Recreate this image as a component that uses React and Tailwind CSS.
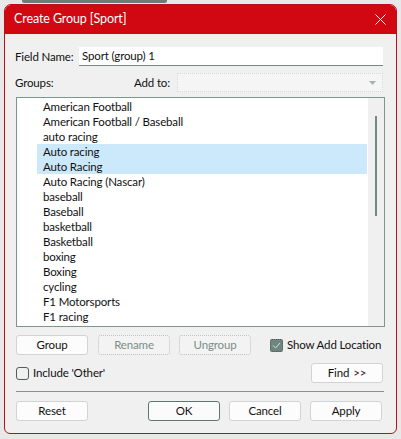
import React from "react";

const items = [
  "American Football",
  "American Football / Baseball",
  "auto racing",
  "Auto racing",
  "Auto Racing",
  "Auto Racing (Nascar)",
  "baseball",
  "Baseball",
  "basketball",
  "Basketball",
  "boxing",
  "Boxing",
  "cycling",
  "F1 Motorsports",
  "F1 racing",
];
const selected = new Set([3, 4]);

function Btn({ children, disabled, focus, className = "" }) {
  const base =
    "h-[20px] w-[72px] flex items-center justify-center rounded-[3px] text-[11.5px] leading-none whitespace-nowrap";
  if (disabled)
    return (
      <div className={`${base} border border-dotted border-[#b9c4bf] bg-[#f3f3f3] text-[#7d8d86] ${className}`}>
        {children}
      </div>
    );
  if (focus)
    return (
      <div className={`${base} border border-[#5f7670] bg-[#fbfbfb] text-[#111111] ${className}`}>
        {children}
      </div>
    );
  return (
    <div className={`${base} border border-[#d3d3d3] bg-[#fcfcfc] text-[#111111] ${className}`}>
      {children}
    </div>
  );
}

export default function App() {
  return (
    <div
      className="w-[401px] h-[439px] bg-[#e8e8e8] overflow-hidden"
      style={{ fontFamily: "Lato, 'Noto Sans', sans-serif" }}
    >
      <div className="h-[4px] flex">
        <div className="ml-[22px] w-[145px] h-[3px] bg-[#6f7b78] rounded-b-[2px]" />
      </div>
      <div className="ml-[4px] w-[393px] h-[430px] border border-[#b5101b] rounded-t-[7px] rounded-b-[6px] bg-[#f0f0f0] overflow-hidden flex flex-col">
        {/* title bar */}
        <div className="h-[29px] bg-[#d10812] flex items-center justify-between pl-[9px] pr-[10px]">
          <span className="text-white text-[12.5px] leading-none whitespace-nowrap tracking-[-0.1px]">Create Group [Sport]</span>
          <svg width="11" height="11" viewBox="0 0 11 11">
            <path d="M0.5 0.5 L10.5 10.5 M10.5 0.5 L0.5 10.5" stroke="#ffffff" strokeWidth="1" />
          </svg>
        </div>
        <div className="pl-[10px] pr-[12px] text-[11.5px] tracking-[-0.15px] leading-none text-[#111111]">
          {/* Field name */}
          <div className="mt-[13px] h-[19px] flex items-center">
            <span className="w-[64px] whitespace-nowrap">Field Name:</span>
            <div className="w-[304px] h-[19px] bg-white border-b border-[#75877f] flex items-center pl-[3px] whitespace-nowrap">
              Sport (group) 1
            </div>
          </div>
          {/* Groups / add to */}
          <div className="mt-[7px] h-[19px] flex items-center">
            <span className="w-[119px] whitespace-nowrap">Groups:</span>
            <span className="w-[43px] whitespace-nowrap">Add to:</span>
            <div className="w-[206px] h-[19px] border border-dotted border-[#d6dbd9] bg-[#f5f5f5] flex items-center justify-end pr-[6px]">
              <svg width="7" height="4" viewBox="0 0 7 4">
                <path d="M0 0 L7 0 L3.5 4 Z" fill="#a8b2ae" />
              </svg>
            </div>
          </div>
          {/* list */}
          <div className="mt-[5px] ml-[1px] w-[369px] h-[230px] border border-[#7c968c] bg-white flex">
            <div className="flex-1 pl-[20px] pt-[1px]">
              {items.map((t, i) => (
                <div
                  key={i}
                  className={`h-[15px] flex items-center pl-[6px] w-[330px] whitespace-nowrap ${
                    selected.has(i) ? "bg-[#cce8fb]" : ""
                  }`}
                >
                  {t}
                </div>
              ))}
            </div>
            <div className="w-[16px] bg-[#f0f0f0] flex justify-center pt-[18px]">
              <div className="w-[2px] h-[100px] bg-[#6f8a80]" />
            </div>
          </div>
          {/* buttons row */}
          <div className="mt-[8px] ml-[1px] h-[20px] flex items-center">
            <Btn>Group</Btn>
            <Btn disabled className="ml-[10px]">Rename</Btn>
            <Btn disabled className="ml-[9px]">Ungroup</Btn>
            <div className="ml-[19px] flex items-center">
              <div className="w-[13px] h-[13px] rounded-[2px] bg-[#6f8680] border border-dotted border-[#4d5e59] flex items-center justify-center">
                <svg width="9" height="7" viewBox="0 0 9 7">
                  <path d="M1 3.5 L3.5 6 L8 1" stroke="#d6e0dc" strokeWidth="1" fill="none" />
                </svg>
              </div>
              <span className="ml-[4px] whitespace-nowrap">Show Add Location</span>
            </div>
          </div>
          {/* include other / find */}
          <div className="mt-[8px] h-[20px] flex items-center justify-between">
            <div className="flex items-center ml-[1px]">
              <div className="w-[13px] h-[13px] rounded-[3px] border border-[#4e5f5a]" />
              <span className="ml-[4px] whitespace-nowrap">Include 'Other'</span>
            </div>
            <Btn className="mr-[1px]">
              Find <span className="ml-[4px] text-[#3a1216]">&gt;&gt;</span>
            </Btn>
          </div>
          {/* separator */}
          <div className="mt-[8px] ml-[1px] w-[368px] h-[1px] bg-[#7c968c]" />
          {/* bottom buttons */}
          <div className="mt-[9px] ml-[1px] h-[20px] flex items-center">
            <Btn>Reset</Btn>
            <Btn focus className="ml-[60px]">OK</Btn>
            <Btn className="ml-[9px]">Cancel</Btn>
            <Btn className="ml-[9px]">Apply</Btn>
          </div>
        </div>
      </div>
    </div>
  );
}
